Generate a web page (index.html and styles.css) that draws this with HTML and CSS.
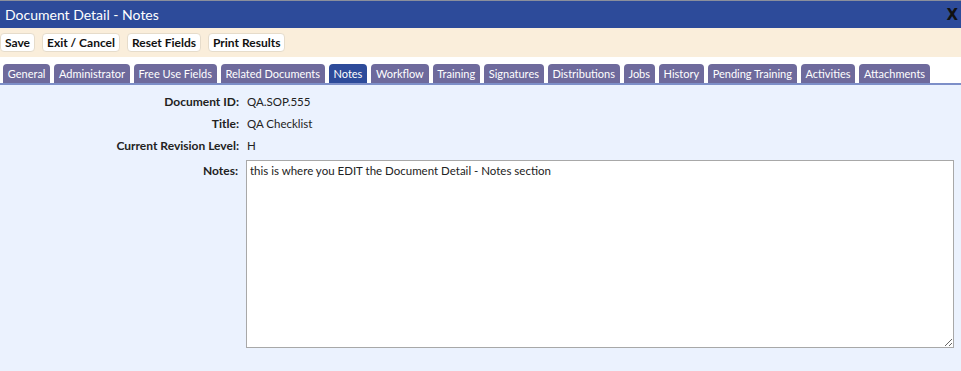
FILE: index.html
```html
<!DOCTYPE html>
<html lang="en">
<head>
    <meta charset="UTF-8">
    <title>Document Detail - Notes</title>
    <link rel="stylesheet" href="styles.css">
</head>
<body>
    <div class="window">
        <div class="title-bar">
            <span class="title">Document Detail - Notes</span>
            <span class="close-btn">X</span>
        </div>

        <div class="toolbar">
            <button class="tool-btn">Save</button>
            <button class="tool-btn">Exit / Cancel</button>
            <button class="tool-btn">Reset Fields</button>
            <button class="tool-btn">Print Results</button>
        </div>

        <!-- tab strip -->
        <div class="tabs">
            <span class="tab">General</span>
            <span class="tab">Administrator</span>
            <span class="tab">Free Use Fields</span>
            <span class="tab">Related Documents</span>
            <span class="tab active">Notes</span>
            <span class="tab">Workflow</span>
            <span class="tab">Training</span>
            <span class="tab">Signatures</span>
            <span class="tab">Distributions</span>
            <span class="tab">Jobs</span>
            <span class="tab">History</span>
            <span class="tab">Pending Training</span>
            <span class="tab">Activities</span>
            <span class="tab">Attachments</span>
        </div>

        <div class="content">
            <div class="field-row">
                <label class="field-label">Document ID:</label>
                <span class="field-value">QA.SOP.555</span>
            </div>
            <div class="field-row">
                <label class="field-label">Title:</label>
                <span class="field-value">QA Checklist</span>
            </div>
            <div class="field-row">
                <label class="field-label">Current Revision Level:</label>
                <span class="field-value">H</span>
            </div>
            <div class="field-row notes-row">
                <label class="field-label" for="notes">Notes:</label>
                <textarea id="notes" class="notes-box">this is where you EDIT the Document Detail - Notes section</textarea>
            </div>
        </div>
    </div>
</body>
</html>
```

FILE: styles.css
```css
* {
    margin: 0;
    padding: 0;
    box-sizing: border-box;
}

body {
    font-family: 'Lato', 'Open Sans', sans-serif;
    background: #ebf2fe;
    width: 961px;
    height: 371px;
    overflow: hidden;
}

.window {
    border-top: 1px solid #8a8f9c;
}

.title-bar {
    height: 27px;
    background: #2d4b9a;
    color: white;
    display: flex;
    align-items: center;
    justify-content: space-between;
    padding: 0 3px 0 5px;
}

.title {
    font-size: 14px;
}

.close-btn {
    color: #111;
    font-family: 'DejaVu Sans', sans-serif;
    font-weight: bold;
    font-size: 15px;
}

.toolbar {
    background: #faeedb;
    height: 29px;
    display: flex;
    align-items: center;
    gap: 7px;
    padding: 0;
}

.tool-btn {
    background: white;
    border: 1px solid #e6dccb;
    border-radius: 4px;
    height: 19px;
    padding: 0 4px;
    font-family: inherit;
    font-size: 12px;
    font-weight: bold;
    color: #111;
}

.tabs {
    background: white;
    display: flex;
    align-items: flex-end;
    gap: 4px;
    padding: 7px 0 0 3px;
    border-bottom: 2px solid #7d8fc8;
}

.tab {
    background: #6e6a9c;
    color: white;
    font-size: 11px;
    height: 19px;
    line-height: 19px;
    padding: 0 4.75px;
    border-radius: 4px 4px 0 0;
}

.tab.active {
    background: #2d4b9a;
}

.content {
    padding-top: 5px;
}

.field-row {
    display: flex;
    gap: 8px;
    height: 22px;
    align-items: center;
}

.field-label {
    width: 239px;
    text-align: right;
    font-size: 12px;
    font-weight: bold;
    color: #222;
    flex: none;
}

.field-value {
    font-size: 11.5px;
    color: #222;
}

.notes-row {
    align-items: flex-start;
    height: auto;
    margin-top: 4px;
}

.notes-row .field-label {
    padding-top: 3px;
    width: 238px;
}

.notes-box {
    width: 708px;
    height: 188px;
    border: 1px solid #a8a8a8;
    background: white;
    font-family: inherit;
    font-size: 11.5px;
    color: #222;
    padding: 3px 3px;
    resize: both;
    outline: none;
}
```
